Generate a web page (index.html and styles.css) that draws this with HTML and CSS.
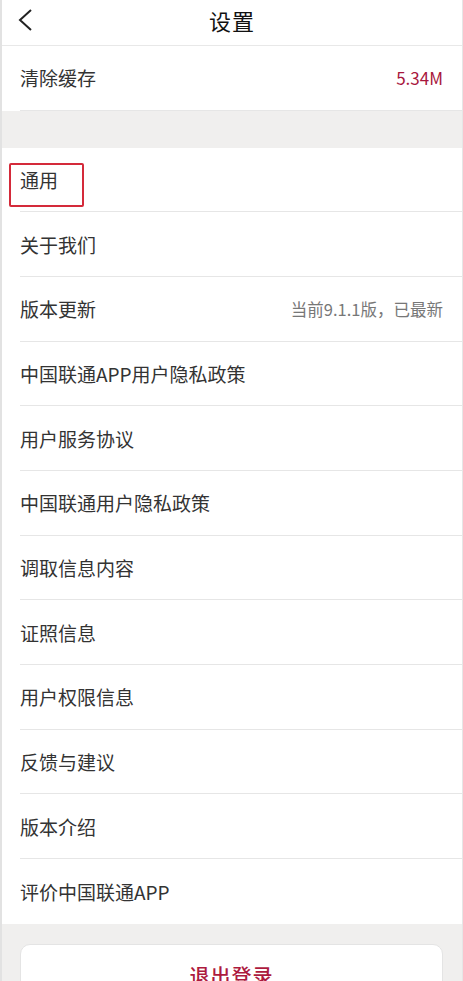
FILE: index.html
```html
<!DOCTYPE html>
<html lang="zh-CN">
<head>
    <meta charset="UTF-8">
    <meta name="viewport" content="width=device-width, initial-scale=1.0">
    <title>设置</title>
    <link rel="stylesheet" href="styles.css">
</head>
<body>
    <div class="page">
        <!-- 顶部标题栏 -->
        <header class="topbar">
            <svg class="back" width="22" height="24" viewBox="0 0 22 24">
                <path d="M16 2 L5 12 L16 22" fill="none" stroke="#222" stroke-width="2"/>
            </svg>
            <h1>设置</h1>
        </header>

        <div class="group">
            <div class="row">
                <span class="label">清除缓存</span>
                <span class="value red">5.34M</span>
            </div>
        </div>

        <div class="gap"></div>

        <div class="group">
            <div class="row">
                <span class="label marked">通用</span>
            </div>
            <div class="row"><span class="label">关于我们</span></div>
            <div class="row">
                <span class="label">版本更新</span>
                <span class="value">当前9.1.1版，已最新</span>
            </div>
            <div class="row"><span class="label">中国联通APP用户隐私政策</span></div>
            <div class="row"><span class="label">用户服务协议</span></div>
            <div class="row"><span class="label">中国联通用户隐私政策</span></div>
            <div class="row"><span class="label">调取信息内容</span></div>
            <div class="row"><span class="label">证照信息</span></div>
            <div class="row"><span class="label">用户权限信息</span></div>
            <div class="row"><span class="label">反馈与建议</span></div>
            <div class="row"><span class="label">版本介绍</span></div>
            <div class="row last"><span class="label">评价中国联通APP</span></div>
        </div>

        <div class="footer">
            <button class="logout">退出登录</button>
        </div>
    </div>
</body>
</html>
```

FILE: styles.css
```css
html, body {
    margin: 0;
    padding: 0;
    background: #f0efee;
}

body {
    font-family: "Noto Sans CJK SC", "Noto Sans", sans-serif;
    color: #333;
}

.page {
    width: 463px;
    min-height: 981px;
    box-sizing: border-box;
    border-left: 2px solid #e2e2e2;
    border-right: 1px solid #e6e6e6;
    background: #f0efee;
    overflow: hidden;
}

.topbar {
    position: relative;
    height: 46px;
    box-sizing: border-box;
    padding-bottom: 6px;
    background: #fff;
    border-bottom: 1px solid #e8e8e8;
    display: flex;
    align-items: center;
    justify-content: center;
}

.topbar h1 {
    margin: 0;
    font-size: 22px;
    font-weight: 400;
    color: #111;
    letter-spacing: 1px;
}

.back {
    position: absolute;
    left: 13px;
    top: 8px;
}

.group {
    background: #fff;
}

.row {
    height: 63.67px;
    margin-left: 18px;
    padding-right: 19px;
    border-bottom: 1px solid #e6e6e6;
    display: flex;
    align-items: center;
    justify-content: space-between;
}

.row.last {
    border-bottom: none;
    height: 64.67px;
}

.label {
    font-size: 19px;
    color: #333;
}

.marked {
    position: relative;
}

.marked::after {
    content: "";
    position: absolute;
    left: -11px;
    top: -3px;
    width: 71px;
    height: 40px;
    border: 2px solid #d42a3a;
    border-radius: 2px;
}

.value {
    font-size: 16.5px;
    color: #777;
}

.value.red {
    font-size: 17px;
    color: #a8173d;
}

.gap {
    height: 37px;
}

.footer {
    padding: 20px 19px 0 18px;
}

.logout {
    display: block;
    width: 100%;
    height: 56px;
    background: #fff;
    border: 1px solid #e4e4e4;
    border-radius: 10px;
    font-family: "Noto Sans CJK SC", sans-serif;
    font-size: 20px;
    font-weight: 500;
    color: #ad1a3e;
    letter-spacing: 1px;
    padding-top: 8px;
}
```
